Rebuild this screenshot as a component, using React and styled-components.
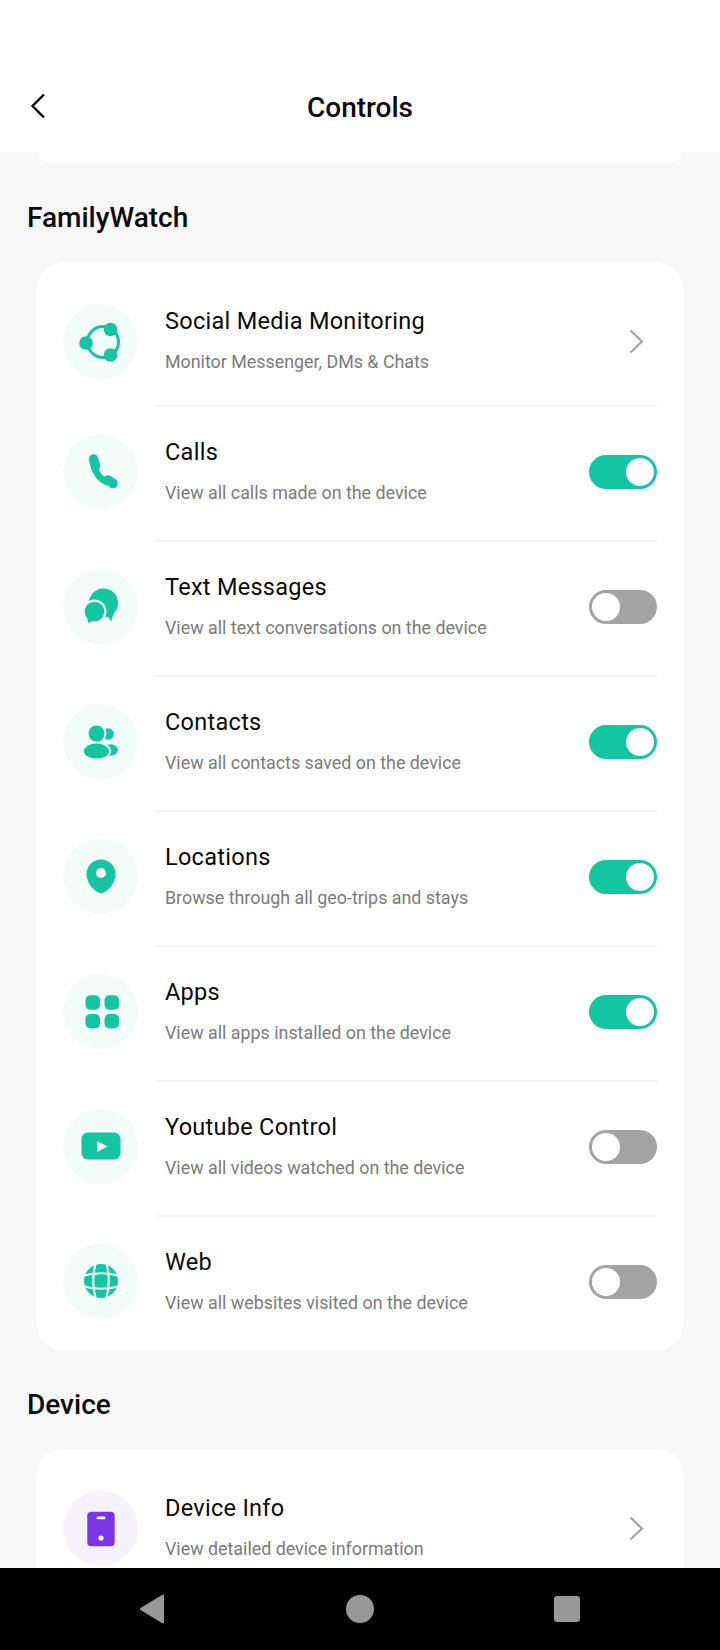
import React from "react";
import styled, { createGlobalStyle } from "styled-components";

const TEAL = "#14c5a2";
const TEAL_BG = "#f3fcf9";
const PURPLE = "#7a35e6";
const PURPLE_BG = "#f7f3fe";
const PAGE_BG = "#f8f8f8";

const GlobalStyle = createGlobalStyle`
  html, body {
    margin: 0;
    padding: 0;
    background: ${PAGE_BG};
  }
  * {
    box-sizing: border-box;
  }
`;

const Screen = styled.div`
  width: 720px;
  height: 1650px;
  display: flex;
  flex-direction: column;
  overflow: hidden;
  background: ${PAGE_BG};
  font-family: Roboto, "Liberation Sans", sans-serif;
  color: #0a0a0a;
`;

const Header = styled.header`
  flex: none;
  height: 152px;
  padding: 63px 29px 0;
  display: grid;
  grid-template-columns: 1fr auto 1fr;
  align-items: center;
  background: #fff;
`;

const BackButton = styled.div`
  display: flex;
  align-items: center;
  margin-top: -3px;
`;

const HeaderTitle = styled.h1`
  margin: 0;
  font-size: 28px;
  font-weight: 500;
  line-height: 32px;
`;

const HeaderLip = styled.div`
  flex: none;
  height: 11px;
  margin: 0 39px;
  background: #fff;
  border-radius: 0 0 26px 26px;
`;

const Main = styled.main`
  flex: 1;
  min-height: 0;
  overflow: hidden;
  padding: 39px 36px 0;
`;

const SectionTitle = styled.h2`
  margin: 0 0 28px -9px;
  font-size: 28px;
  font-weight: 500;
  line-height: 32px;
`;

const Card = styled.section`
  display: flex;
  flex-direction: column;
  background: #fff;
  border-radius: 28px;
  padding: 14px 27px 0;
  margin-bottom: 39px;
`;

const Row = styled.div`
  display: flex;
  align-items: center;

  &:last-child {
    margin-bottom: -2px;
  }
`;

const IconCircle = styled.div`
  flex: none;
  width: 75px;
  height: 75px;
  border-radius: 50%;
  display: flex;
  align-items: center;
  justify-content: center;
  background: ${(p) => (p.$purple ? PURPLE_BG : TEAL_BG)};
  margin-bottom: 7px;

  ${Row}:first-child > & {
    margin-bottom: 0;
  }
`;

const RowBody = styled.div`
  flex: 1;
  min-width: 0;
  height: 135px;
  margin-left: 17px;
  padding: 0 0 3px 10px;
  display: flex;
  align-items: center;
  justify-content: space-between;
  border-bottom: 2px solid ${(p) => (p.$last ? "transparent" : "#f4f4f4")};

  ${Row}:first-child > & {
    height: 131px;
    padding-bottom: 0;
  }
`;

const RowText = styled.div`
  display: flex;
  flex-direction: column;
  gap: 14px;
  margin-bottom: 2px;
`;

const RowTitle = styled.div`
  font-size: 23.5px;
  line-height: 30px;
  letter-spacing: 0.28px;
`;

const RowSub = styled.div`
  font-size: 17.85px;
  line-height: 24px;
  color: #7b7b7b;
`;

const Toggle = styled.div`
  flex: none;
  width: 68px;
  height: 34px;
  border-radius: 17px;
  padding: 3px;
  display: flex;
  justify-content: ${(p) => (p.$on ? "flex-end" : "flex-start")};
  background: ${(p) => (p.$on ? TEAL : "#a3a3a3")};
`;

const Knob = styled.div`
  width: 28px;
  height: 28px;
  border-radius: 50%;
  background: #fff;
`;

const Chevron = styled.svg`
  flex: none;
  margin: 1px 13px 0 0;
`;

const NavBar = styled.nav`
  flex: none;
  height: 82px;
  padding: 0 140px 0 139px;
  display: flex;
  align-items: center;
  justify-content: space-between;
  background: #000;
`;

const NavCircle = styled.div`
  width: 28px;
  height: 28px;
  border-radius: 50%;
  background: #989898;
`;

const NavSquare = styled.div`
  width: 26px;
  height: 26px;
  border-radius: 3px;
  background: #989898;
`;

const Glyph = ({ children, color = TEAL }) => (
  <svg width="48" height="48" viewBox="0 0 48 48" fill={color} aria-hidden="true">
    {children}
  </svg>
);

const SocialIcon = () => (
  <Glyph>
    <circle cx="26" cy="24" r="15.5" fill="none" stroke={TEAL} strokeWidth="3" />
    <circle cx="33.5" cy="11.5" r="6.8" />
    <circle cx="9" cy="25" r="6.8" />
    <circle cx="33.5" cy="37" r="6.8" />
  </Glyph>
);

const PhoneIcon = () => (
  <Glyph>
    <path d="M16.5 12 C15.5 23 23 34 33 35.5" fill="none" stroke={TEAL} strokeWidth="6.5" />
    <path d="M16.5 12 L18.5 19" fill="none" stroke={TEAL} strokeWidth="9.5" strokeLinecap="round" />
    <path d="M31 33 L36 36.5" fill="none" stroke={TEAL} strokeWidth="9.5" strokeLinecap="round" />
  </Glyph>
);

const ChatIcon = () => (
  <Glyph>
    <circle cx="26.5" cy="21" r="14.5" />
    <path d="M30 33 L34 39.5 L37 30 Z" />
    <circle cx="17.5" cy="29.5" r="12" fill={TEAL_BG} />
    <circle cx="17.5" cy="29.5" r="9.8" />
    <path d="M10 33 L11 41 L19 37.5 Z" />
  </Glyph>
);

const ContactsIcon = () => (
  <Glyph>
    <circle cx="31" cy="17" r="5.8" />
    <ellipse cx="33" cy="33" rx="8" ry="5.8" />
    <circle cx="19.5" cy="16.5" r="10" fill={TEAL_BG} />
    <ellipse cx="19.5" cy="34" rx="14.5" ry="9.5" fill={TEAL_BG} />
    <circle cx="19.5" cy="16.5" r="8" />
    <ellipse cx="19.5" cy="34" rx="12.5" ry="7.5" />
  </Glyph>
);

const PinIcon = () => (
  <Glyph>
    <path d="M24 7.5 C32 7.5 38.5 14 38.5 22 C38.5 31 30 41 24 41 C18 41 9.5 31 9.5 22 C9.5 14 16 7.5 24 7.5 Z" />
    <circle cx="24" cy="21" r="5" fill="#fff" />
  </Glyph>
);

const AppsIcon = () => (
  <Glyph>
    <rect x="8.5" y="8.3" width="14.5" height="14.5" rx="5" />
    <rect x="27.5" y="8.3" width="14.5" height="14.5" rx="5" />
    <rect x="8.5" y="27" width="14.5" height="14.5" rx="5" />
    <rect x="27.5" y="27" width="14.5" height="14.5" rx="5" />
  </Glyph>
);

const VideoIcon = () => (
  <Glyph>
    <rect x="4.5" y="10.5" width="39" height="27" rx="6.5" />
    <path d="M20 19 L30.5 24.5 L20 30 Z" fill="#fff" />
  </Glyph>
);

const GlobeIcon = () => (
  <Glyph>
    <circle cx="24" cy="24" r="17" />
    <g fill="none" stroke={TEAL_BG} strokeWidth="2.2">
      <path d="M19 5 Q13.5 24 19 43" />
      <path d="M29 5 Q34.5 24 29 43" />
      <path d="M5 19 Q24 13.5 43 19" />
      <path d="M5 29 Q24 34.5 43 29" />
    </g>
  </Glyph>
);

const DeviceIcon = () => (
  <Glyph color={PURPLE}>
    <rect x="10.3" y="6.7" width="27.4" height="34.6" rx="4" />
    <rect x="19.5" y="11.5" width="9" height="2.8" rx="1.2" fill="#fff" />
    <circle cx="24" cy="33" r="2.6" fill="#fff" />
  </Glyph>
);

const ChevronRight = () => (
  <Chevron width="15" height="25" viewBox="0 0 15 25" fill="none">
    <path d="M1.5 1.5 L13 12.5 L1.5 23.5" stroke="#a3a3a3" strokeWidth="2.2" />
  </Chevron>
);

const familyWatch = [
  { title: "Social Media Monitoring", sub: "Monitor Messenger, DMs & Chats", icon: SocialIcon, link: true },
  { title: "Calls", sub: "View all calls made on the device", icon: PhoneIcon, on: true },
  { title: "Text Messages", sub: "View all text conversations on the device", icon: ChatIcon, on: false },
  { title: "Contacts", sub: "View all contacts saved on the device", icon: ContactsIcon, on: true },
  { title: "Locations", sub: "Browse through all geo-trips and stays", icon: PinIcon, on: true },
  { title: "Apps", sub: "View all apps installed on the device", icon: AppsIcon, on: true },
  { title: "Youtube Control", sub: "View all videos watched on the device", icon: VideoIcon, on: false },
  { title: "Web", sub: "View all websites visited on the device", icon: GlobeIcon, on: false },
];

const device = [
  { title: "Device Info", sub: "View detailed device information", icon: DeviceIcon, link: true, purple: true },
];

function ListCard({ items }) {
  return (
    <Card>
      {items.map((item, i) => (
        <Row key={item.title}>
          <IconCircle $purple={item.purple}>
            <item.icon />
          </IconCircle>
          <RowBody $last={i === items.length - 1}>
            <RowText>
              <RowTitle>{item.title}</RowTitle>
              <RowSub>{item.sub}</RowSub>
            </RowText>
            {item.link ? (
              <ChevronRight />
            ) : (
              <Toggle $on={item.on}>
                <Knob />
              </Toggle>
            )}
          </RowBody>
        </Row>
      ))}
    </Card>
  );
}

export default function App() {
  return (
    <Screen>
      <GlobalStyle />
      <Header>
        <BackButton>
          <svg width="18" height="26" viewBox="0 0 18 26" fill="none">
            <path d="M15 1.5 L3.5 13 L15 24.5" stroke="#0a0a0a" strokeWidth="2.4" />
          </svg>
        </BackButton>
        <HeaderTitle>Controls</HeaderTitle>
      </Header>
      <HeaderLip />
      <Main>
        <SectionTitle>FamilyWatch</SectionTitle>
        <ListCard items={familyWatch} />
        <SectionTitle>Device</SectionTitle>
        <ListCard items={device} />
      </Main>
      <NavBar>
        <svg width="26" height="30" viewBox="0 0 26 30" fill="#989898">
          <path d="M25 2 C25 0.8 24 0.2 23 0.9 L1.5 14 C0.6 14.6 0.6 15.4 1.5 16 L23 29.1 C24 29.8 25 29.2 25 28 Z" />
        </svg>
        <NavCircle />
        <NavSquare />
      </NavBar>
    </Screen>
  );
}
